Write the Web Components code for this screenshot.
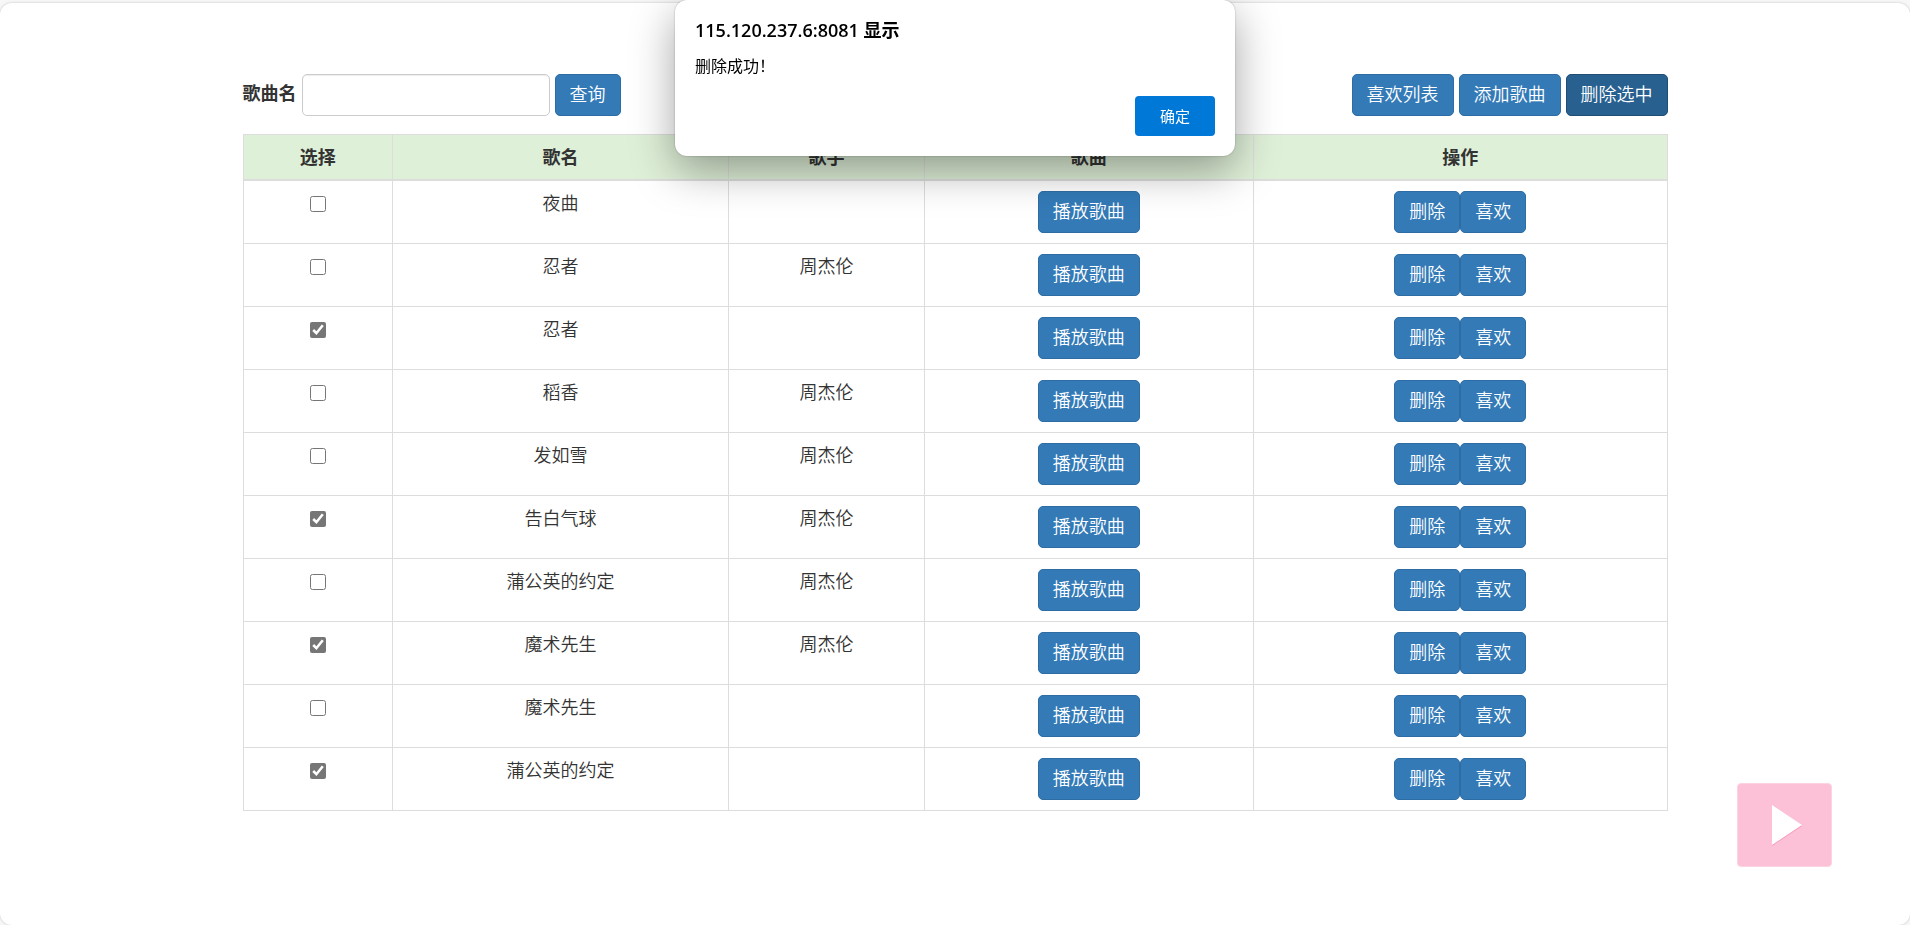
<!DOCTYPE html>
<html lang="zh-CN">
<head>
<meta charset="utf-8">
<title>歌曲列表</title>
<style>
html, body {
    height: 100%;
}
body {
    margin: 0;
    background-color: #f7f7f7;
    color: #333;
    font: 350 18px/24px "Open Sans", "Noto Sans CJK SC", sans-serif;
}
</style>
</head>
<body>
<music-page></music-page>

<script>
const songs = [
    { name: '夜曲', singer: '' },
    { name: '忍者', singer: '周杰伦' },
    { name: '忍者', singer: '', checked: true },
    { name: '稻香', singer: '周杰伦' },
    { name: '发如雪', singer: '周杰伦' },
    { name: '告白气球', singer: '周杰伦', checked: true },
    { name: '蒲公英的约定', singer: '周杰伦' },
    { name: '魔术先生', singer: '周杰伦', checked: true },
    { name: '魔术先生', singer: '' },
    { name: '蒲公英的约定', singer: '', checked: true }
];

const template = (html) => {
    const el = document.createElement('template');
    el.innerHTML = html;
    return el;
};

class BaseElement extends HTMLElement {
    constructor() {
        super();
        this.attachShadow({ mode: 'open' });
        this.shadowRoot.appendChild(this.constructor.template.content.cloneNode(true));
    }
}


class MusicButton extends BaseElement {
    static template = template(`
<style>
:host {
    display: inline-flex;
    vertical-align: top;
}
button {
    box-sizing: border-box;
    height: 42px;
    padding: 0 14px 2px;
    border: 1px solid #2e6da4;
    border-radius: 5px;
    background-color: #337ab7;
    color: #fff;
    font: inherit;
    white-space: nowrap;
    cursor: pointer;
}
button:hover, :host([active]) button {
    background-color: #286090;
    border-color: #204d74;
}
</style>
<button type="button"><slot></slot></button>
`);
}
window.customElements.define('music-button', MusicButton);


class MusicToolbar extends BaseElement {
    static template = template(`
<style>
:host {
    display: flex;
    justify-content: space-between;
    margin-bottom: 18px;
}
.group {
    display: flex;
    align-items: center;
    gap: 5px;
}
label {
    padding-bottom: 4px;
    font-weight: 700;
}
input {
    box-sizing: border-box;
    width: 248px;
    height: 42px;
    padding: 8px 15px;
    border: 1px solid #ccc;
    border-radius: 5px;
    box-shadow: inset 0 1px 1px rgba(0, 0, 0, .075);
    background-color: #fff;
    color: #555;
    font: inherit;
}
</style>
<form class="group">
    <label for="name">歌曲名</label>
    <input type="text" id="name">
    <music-button>查询</music-button>
</form>
<div class="group">
    <music-button>喜欢列表</music-button>
    <music-button>添加歌曲</music-button>
    <music-button active>删除选中</music-button>
</div>
`);
}
window.customElements.define('music-toolbar', MusicToolbar);


class MusicTable extends BaseElement {
    static template = template(`
<style>
:host {
    display: block;
}
table {
    width: 100%;
    table-layout: fixed;
    border-collapse: collapse;
    text-align: center;
}
th, td {
    box-sizing: border-box;
    padding: 10px;
    border: 1px solid #ddd;
    vertical-align: top;
}
th {
    border-bottom-width: 2px;
    background-color: #dff0d8;
    font-weight: 700;
}
.check { width: 10.5%; }
.name { width: 23.6%; }
.singer { width: 13.75%; }
.song { width: 23.1%; }
input {
    display: block;
    width: 16px;
    height: 16px;
    margin: 5px auto 0;
    accent-color: #767676;
}
.actions {
    display: flex;
    justify-content: center;
}
</style>
<table>
    <thead>
        <tr>
            <th class="check">选择</th>
            <th class="name">歌名</th>
            <th class="singer">歌手</th>
            <th class="song">歌曲</th>
            <th>操作</th>
        </tr>
    </thead>
    <tbody></tbody>
</table>
`);

    connectedCallback() {
        this.render();
    }

    render() {
        const body = this.shadowRoot.querySelector('tbody');
        body.innerHTML = songs.map(song => `
        <tr>
            <td><input type="checkbox" aria-label="${song.name}" ${song.checked ? 'checked' : ''}></td>
            <td>${song.name}</td>
            <td>${song.singer}</td>
            <td><music-button>播放歌曲</music-button></td>
            <td><div class="actions"><music-button>删除</music-button><music-button>喜欢</music-button></div></td>
        </tr>`).join('');
    }
}
window.customElements.define('music-table', MusicTable);


class MusicAlert extends BaseElement {
    static template = template(`
<style>
:host {
    position: fixed;
    top: 0;
    left: 50%;
    transform: translateX(-50%);
    display: flex;
    flex-direction: column;
    box-sizing: border-box;
    width: 560px;
    padding: 18px 20px 20px;
    border-radius: 12px;
    background-color: #fff;
    box-shadow: 0 0 2px rgba(0, 0, 0, .3), 0 14px 44px rgba(0, 0, 0, .36);
    color: #000;
    font-weight: 400;
}
h2 {
    margin: 0;
    font-size: 18px;
    font-weight: 600;
    line-height: 24px;
}
p {
    margin: 12px 0 18px;
    font-size: 16px;
}
button {
    align-self: flex-end;
    width: 80px;
    height: 40px;
    border: 0;
    border-radius: 4px;
    background-color: #0078d7;
    color: #fff;
    font: inherit;
    font-size: 15px;
}
</style>
<h2><slot name="title"></slot></h2>
<p><slot></slot></p>
<button type="button">确定</button>
`);

    connectedCallback() {
        this.shadowRoot.querySelector('button').addEventListener('click', () => this.remove());
    }
}
window.customElements.define('music-alert', MusicAlert);


class MusicPlayer extends BaseElement {
    static template = template(`
<style>
:host {
    position: fixed;
    right: 78px;
    bottom: 58px;
}
button {
    display: flex;
    align-items: center;
    justify-content: center;
    width: 95px;
    height: 84px;
    padding: 0;
    border: 1px solid #fdd3e2;
    border-radius: 4px;
    background-color: #fcc0d7;
}
svg {
    display: block;
}
</style>
<button type="button" aria-label="播放">
    <svg width="34" height="46" viewBox="0 0 34 46">
        <path d="M4 5v39l30-20z" fill="#f994ba"/>
        <path d="M4 3v40l30-20z" fill="#fff"/>
    </svg>
</button>
`);
}
window.customElements.define('music-player', MusicPlayer);


class MusicPage extends BaseElement {
    static template = template(`
<style>
:host {
    display: flow-root;
    box-sizing: border-box;
    min-height: 100%;
    padding-top: 3px;
}
main {
    box-sizing: border-box;
    min-height: calc(100vh - 3px);
    padding: 71px 0;
    border-radius: 12px;
    background-color: #fff;
    box-shadow: 0 0 3px rgba(0, 0, 0, .2);
}
.container {
    max-width: 1425px;
    margin: 0 auto;
}
</style>
<main>
    <div class="container">
        <music-toolbar></music-toolbar>
        <music-table></music-table>
    </div>
</main>
<music-player></music-player>
<music-alert>
    <span slot="title">115.120.237.6:8081 显示</span>
    删除成功！
</music-alert>
`);
}
window.customElements.define('music-page', MusicPage);
</script>
</body>
</html>
